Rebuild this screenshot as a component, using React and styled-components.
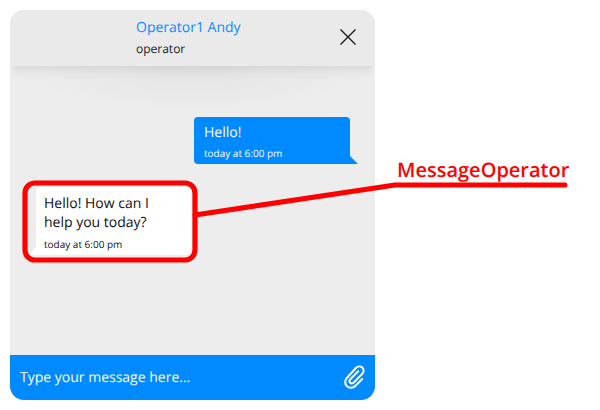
import React from 'react';
import styled, { createGlobalStyle } from 'styled-components';

const GlobalStyle = createGlobalStyle`
  * { box-sizing: border-box; }
  body {
    margin: 0;
    background: #fff;
    font-family: "Open Sans", "Noto Sans", sans-serif;
    text-rendering: geometricPrecision;
  }
`;

const Page = styled.main`
  position: relative;
  width: 600px;
  height: 410px;
  padding: 10px;
  overflow: hidden;
`;

const ChatWindow = styled.section`
  display: flex;
  flex-direction: column;
  width: 365px;
  height: 390px;
  border-radius: 14px;
  overflow: hidden;
  background: #ededed;
`;

const Header = styled.header`
  display: grid;
  grid-template-columns: 1fr 38px;
  align-items: center;
  flex: 0 0 56px;
  padding-bottom: 2px;
  background: #eaeaea;
`;

const OperatorInfo = styled.div`
  padding-left: 126px;
`;

const OperatorName = styled.div`
  font-size: 14px;
  line-height: 22px;
  color: #0a8aff;
`;

const OperatorRole = styled.div`
  font-size: 12px;
  line-height: 16px;
  margin-top: 2px;
  color: #1c1c1c;
`;

const IconButton = styled.button`
  display: flex;
  padding: 0;
  border: 0;
  background: none;
`;

const Messages = styled.div`
  display: flex;
  flex-direction: column;
  flex: 1;
  padding: 51px 25px 0 26px;
  background:
    linear-gradient(to right, #ededed, rgba(237, 237, 237, 0) 6px, rgba(237, 237, 237, 0) 359px, #ededed) 0 0 / 100% 14px no-repeat,
    linear-gradient(rgba(0, 0, 0, 0.07), rgba(0, 0, 0, 0.02) 8px, transparent 14px) 0 0 / 100% 14px no-repeat,
    radial-gradient(ellipse 182px 44px at 50% 0, rgba(0, 0, 0, 0.04), rgba(0, 0, 0, 0.018) 55%, transparent),
    #ededed;
`;

const Bubble = styled.article`
  position: relative;
  align-self: ${({ $own }) => ($own ? 'flex-end' : 'flex-start')};
  width: ${({ $own }) => ($own ? 156.5 : 156)}px;
  height: ${({ $own }) => ($own ? 47 : 68)}px;
  margin-top: ${({ $own }) => ($own ? 0 : 23)}px;
  padding: ${({ $own }) => ($own ? '6px 10.5px' : '7px 8px')};
  border-radius: ${({ $own }) => ($own ? '4px 4px 0 4px' : '4px 4px 4px 0')};
  color: ${({ $own }) => ($own ? '#fff' : '#111')};
  background: ${({ $own }) => ($own ? '#008aff' : '#fff')};
`;

const BubbleTail = styled.svg`
  position: absolute;
  bottom: 0;
  ${({ $own }) => ($own ? 'right: -8px;' : 'left: -8px;')}
`;

const MessageText = styled.p`
  margin: 0;
  font-size: 14px;
  line-height: 19px;
`;

const Timestamp = styled.time`
  display: block;
  margin-top: ${({ $own }) => ($own ? 4 : 5)}px;
  font-size: 10px;
  line-height: 14px;
`;

const Composer = styled.footer`
  display: flex;
  align-items: center;
  justify-content: space-between;
  flex: 0 0 45px;
  padding: 0 9px 2px 10px;
  color: #fff;
  background: #008aff;
`;

const Placeholder = styled.span`
  padding-top: 2px;
  font-size: 14px;
  line-height: 20px;
`;

const Annotation = styled.svg`
  position: absolute;
  inset: 0;
`;

const AnnotationLabel = styled.div`
  position: absolute;
  left: 397px;
  top: 156px;
  font-size: 20px;
  font-weight: 600;
  line-height: 28px;
  color: #f00;
`;

function Message({ own, lines, time }) {
  return (
    <Bubble $own={own}>
      {lines.map((line) => (
        <MessageText key={line}>{line}</MessageText>
      ))}
      <Timestamp $own={own}>{time}</Timestamp>
      <BubbleTail $own={own} width="12" height="8" viewBox="0 0 12 8">
        <path d={own ? 'M0 0H4L12 8H0Z' : 'M12 0H8L0 8H12Z'} fill={own ? '#008aff' : '#fff'} />
      </BubbleTail>
    </Bubble>
  );
}

function CloseIcon() {
  return (
    <svg width="22" height="22" viewBox="0 0 22 22" fill="none">
      <path d="M3.5 3.5L18.5 18.5M18.5 3.5L3.5 18.5" stroke="#1a1a1a" strokeWidth="1.4" />
    </svg>
  );
}

function PaperclipIcon() {
  return (
    <svg width="24" height="26" viewBox="0 0.8 24 26" fill="none">
      <path
        d="M20.2 15.8L13.5 22.6C10.9 25.2 7.2 25.2 4.9 22.9C2.6 20.6 2.6 16.9 5 14.5L13.9 4.8C15.8 2.8 18.5 2.7 20.3 4.4C22.1 6.1 22 8.8 20.2 10.7L11.7 19.4C10.6 20.5 9.1 20.6 8.1 19.6C7.1 18.6 7.2 17.1 8.3 16L16.2 8"
        stroke="#fff"
        strokeWidth="2"
        strokeLinecap="round"
        strokeLinejoin="round"
      />
    </svg>
  );
}

export default function App() {
  return (
    <>
      <GlobalStyle />
      <Page>
        <ChatWindow>
          <Header>
            <OperatorInfo>
              <OperatorName>Operator1 Andy</OperatorName>
              <OperatorRole>operator</OperatorRole>
            </OperatorInfo>
            <IconButton aria-label="Close">
              <CloseIcon />
            </IconButton>
          </Header>
          <Messages>
            <Message own lines={['Hello!']} time="today at 6:00 pm" />
            <Message lines={['Hello! How can I', 'help you today?']} time="today at 6:00 pm" />
          </Messages>
          <Composer>
            <Placeholder>Type your message here...</Placeholder>
            <IconButton aria-label="Attach file">
              <PaperclipIcon />
            </IconButton>
          </Composer>
        </ChatWindow>
        <Annotation width="600" height="410" viewBox="0 0 600 410" fill="none" stroke="#f00">
          <rect x="25" y="183" width="170" height="77" rx="10" strokeWidth="5.2" />
          <path d="M195 215L395 185H565" strokeWidth="5" strokeLinecap="round" strokeLinejoin="round" />
        </Annotation>
        <AnnotationLabel>MessageOperator</AnnotationLabel>
      </Page>
    </>
  );
}
